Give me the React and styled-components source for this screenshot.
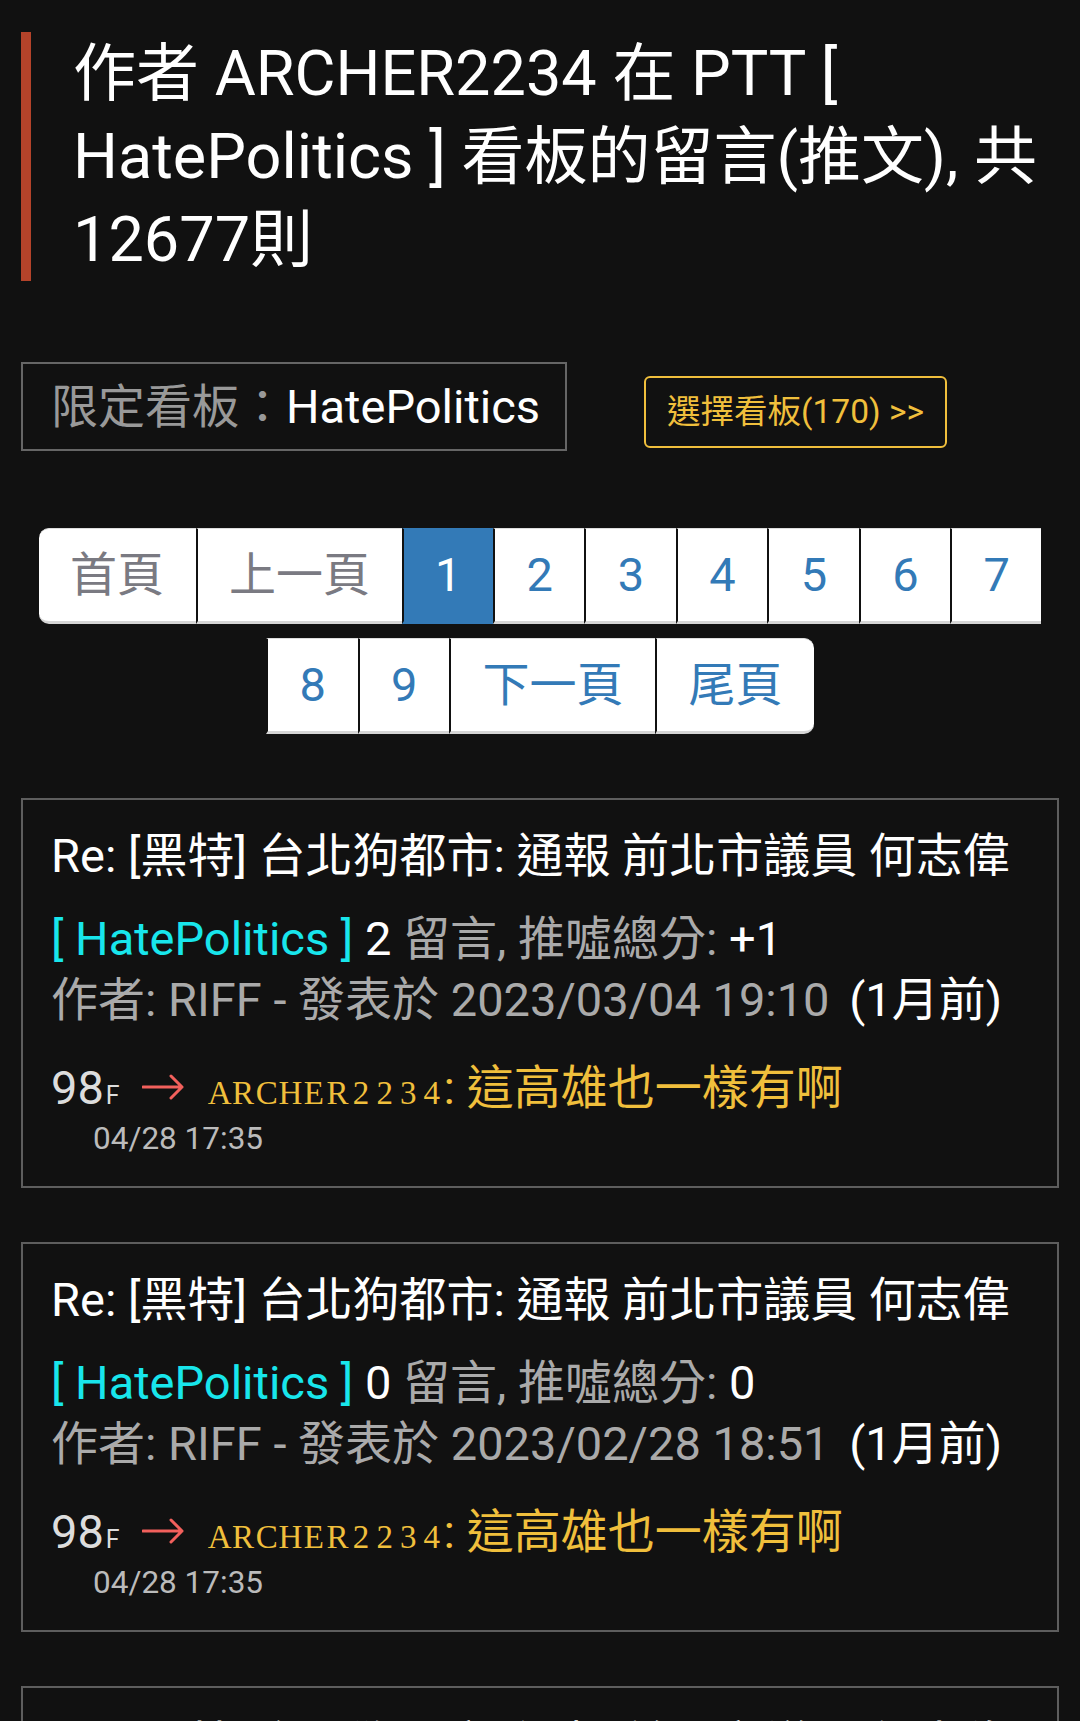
import React from "react";
import styled, { createGlobalStyle } from "styled-components";

const GlobalStyle = createGlobalStyle`
  html, body {
    margin: 0;
    padding: 0;
    background: #111;
  }
  body {
    font-family: Roboto, "Noto Sans CJK TC", sans-serif;
    color: #fff;
  }
`;

const Page = styled.div`
  padding: 0 21px;
  min-height: 1721px;
`;

const Heading = styled.h1`
  margin: 32px 0 0;
  padding-left: 42px;
  border-left: 10px solid #b4432a;
  font-size: 63px;
  font-weight: 400;
  line-height: 83px;
  color: #fff;
`;

const FilterRow = styled.div`
  display: flex;
  align-items: baseline;
  gap: 77px;
  margin-top: 81px;
`;

const BoardBox = styled.div`
  border: 2px solid #666;
  padding: 0 25px 0 28px;
  font-size: 47px;
  line-height: 85px;
  color: #fff;
`;

const Muted = styled.span`
  color: #999;
`;

const SelectButton = styled.a`
  border: 2px solid #f0bf3c;
  border-radius: 6px;
  padding: 0 21px;
  font-size: 33.5px;
  line-height: 68px;
  color: #f0bf3c;
  text-decoration: none;
`;

const Pager = styled.ul`
  list-style: none;
  margin: 77px 0 0;
  padding: 0;
  display: flex;
  flex-wrap: wrap;
  justify-content: center;
  row-gap: 14px;
`;

const PageItem = styled.li`
  padding: 0 31.5px;
  font-size: 47px;
  line-height: 92px;
  background: ${(p) => (p.$active ? "#337ab7" : "#fff")};
  color: ${(p) => (p.$active ? "#fff" : p.$disabled ? "#7a7a82" : "#337ab7")};
  border-top: 1px solid ${(p) => (p.$active ? "#337ab7" : "#ddd")};
  border-bottom: 3px solid ${(p) => (p.$active ? "#337ab7" : "#d6d6d6")};

  & + & {
    border-left: 2px solid #111;
  }
  &:first-child {
    border-radius: 10px 0 0 10px;
  }
  &:last-child {
    border-radius: 0 10px 10px 0;
  }
`;

const CardList = styled.div`
  display: flex;
  flex-direction: column;
  gap: 54px;
  margin-top: 64px;
`;

const Card = styled.div`
  border: 2px solid #5e5e5e;
  padding: 24px 28px 36px;
`;

const CardTitle = styled.h4`
  margin: 0;
  font-size: 47px;
  font-weight: 400;
  line-height: 64px;
  color: #fff;
  white-space: nowrap;
`;

const Meta = styled.div`
  margin-top: 20px;
  font-size: 47px;
  line-height: 61px;
  color: #aaa;
  white-space: nowrap;
`;

const Board = styled.span`
  color: #18e6ec;
`;

const Bright = styled.span`
  color: #fff;
  margin-left: ${(p) => p.$gap || 0}px;
`;

const CommentRow = styled.div`
  margin-top: 26px;
  font-size: 47px;
  line-height: 64px;
  color: #ddd;
  white-space: nowrap;
`;

const Floor = styled.span`
  font-size: 25px;
  margin-left: 2px;
`;

const Arrow = styled.svg`
  width: 42px;
  height: 34px;
  margin: 0 24px 0 22px;
  vertical-align: baseline;
`;

const Name = styled.span`
  color: #f0bf3c;
`;

const NameCell = styled.span`
  display: inline-block;
  width: 23.6px;
  text-align: center;
  font-family: "Liberation Serif", serif;
  font-size: 33px;
  line-height: 1;
`;

const Comment = styled.span`
  color: #f0bf3c;
`;

const CommentTime = styled.div`
  padding-left: 42px;
  font-size: 31.5px;
  line-height: 22px;
  color: #bbb;
`;

const pages = [
  { label: "首頁", disabled: true },
  { label: "上一頁", disabled: true },
  { label: "1", active: true },
  { label: "2" },
  { label: "3" },
  { label: "4" },
  { label: "5" },
  { label: "6" },
  { label: "7" },
  { label: "8" },
  { label: "9" },
  { label: "下一頁" },
  { label: "尾頁" },
];

const posts = [
  { count: "2", score: "+1", date: "2023/03/04 19:10" },
  { count: "0", score: "0", date: "2023/02/28 18:51" },
  { count: "0", score: "0", date: "2023/02/28 18:51" },
];

const MonoName = ({ text }) => (
  <Name>
    {text.split("").map((ch, i) => (
      <NameCell key={i}>{ch}</NameCell>
    ))}
    {": "}
  </Name>
);

const RightArrow = () => (
  <Arrow viewBox="0 0 42 34">
    <path
      d="M1 17 H40 M29 6 L40 17 L29 28"
      fill="none"
      stroke="#f2605c"
      strokeWidth="3"
      strokeLinecap="round"
      strokeLinejoin="round"
    />
  </Arrow>
);

const PostCard = ({ post }) => (
  <Card>
    <CardTitle>Re: [黑特] 台北狗都市: 通報 前北市議員 何志偉</CardTitle>
    <Meta>
      <div>
        <Board>[ HatePolitics ]</Board> <Bright>{post.count}</Bright> 留言, 推噓總分:{" "}
        <Bright>{post.score}</Bright>
      </div>
      <div>
        作者: RIFF - 發表於 {post.date}
        <Bright $gap={8}> (1月前)</Bright>
      </div>
    </Meta>
    <CommentRow>
      98<Floor>F</Floor>
      <RightArrow />
      <MonoName text="ARCHER2234" />
      <Comment>這高雄也一樣有啊</Comment>
    </CommentRow>
    <CommentTime>04/28 17:35</CommentTime>
  </Card>
);

export default function App() {
  return (
    <Page>
      <GlobalStyle />
      <Heading>作者 ARCHER2234 在 PTT [ HatePolitics ] 看板的留言(推文), 共 12677則</Heading>
      <FilterRow>
        <BoardBox>
          <Muted>限定看板：</Muted>HatePolitics
        </BoardBox>
        <SelectButton href="#">選擇看板(170) &gt;&gt;</SelectButton>
      </FilterRow>
      <Pager>
        {pages.map((p) => (
          <PageItem key={p.label} $active={p.active} $disabled={p.disabled}>
            {p.label}
          </PageItem>
        ))}
      </Pager>
      <CardList>
        {posts.map((post, i) => (
          <PostCard key={i} post={post} />
        ))}
      </CardList>
    </Page>
  );
}
